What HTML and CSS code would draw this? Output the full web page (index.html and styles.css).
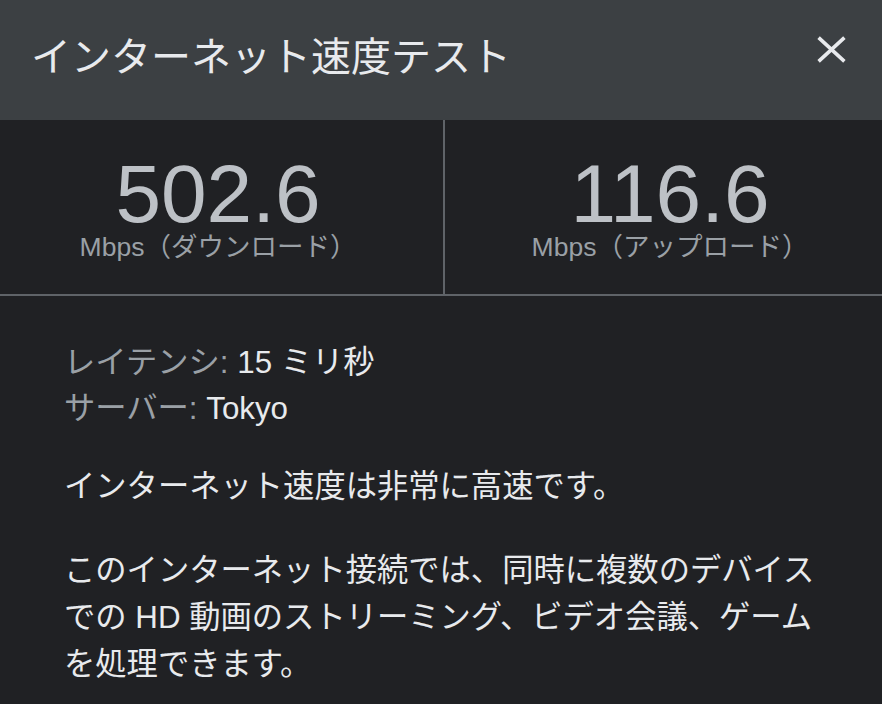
FILE: index.html
```html
<!DOCTYPE html>
<html lang="ja">
<head>
<meta charset="utf-8">
<link rel="stylesheet" href="styles.css">
</head>
<body>
<div class="dialog">
  <header class="header">
    <h1 class="title">インターネット速度テスト</h1>
    <button class="close" aria-label="閉じる">
      <svg width="29" height="27" viewBox="0 0 29 27"><path d="M1.6 1.6 L27.4 25.4 M27.4 1.6 L1.6 25.4" stroke="#e8eaed" stroke-width="3.6" fill="none"/></svg>
    </button>
  </header>
  <section class="stats">
    <div class="stat stat-down">
      <div class="value">502.6</div>
      <div class="unit">Mbps（ダウンロード）</div>
    </div>
    <div class="stat">
      <div class="value">116.6</div>
      <div class="unit">Mbps（アップロード）</div>
    </div>
  </section>
  <section class="details">
    <div class="meta">
      <div><span class="label">レイテンシ: </span><span class="val">15 ミリ秒</span></div>
      <div><span class="label">サーバー: </span><span class="val">Tokyo</span></div>
    </div>
    <p class="summary">インターネット速度は非常に高速です。</p>
    <p class="desc">このインターネット接続では、同時に複数のデバイスでの HD 動画のストリーミング、ビデオ会議、ゲームを処理できます。</p>
  </section>
</div>
</body>
</html>
```
FILE: styles.css
```css
html, body {
  margin: 0;
  padding: 0;
  background: #202124;
}
body {
  font-family: "Liberation Sans", Arial, "Noto Sans CJK JP", sans-serif;
  color: #e8eaed;
  width: 882px;
  height: 704px;
  overflow: hidden;
}
.dialog {
  width: 900px;
}
.header {
  height: 120px;
  background: #3c4043;
  display: flex;
  align-items: flex-start;
  justify-content: space-between;
  padding: 37px 54px 0 31px;
  box-sizing: border-box;
}
.title {
  margin: 0;
  font-weight: normal;
  font-size: 40px;
  color: #e8eaed;
  line-height: 40px;
}
.close {
  background: none;
  border: 0;
  padding: 0;
  margin-top: -1px;
  width: 29px;
  height: 27px;
  display: flex;
}
.stats {
  display: grid;
  grid-template-columns: 445px 455px;
  height: 176px;
  border-bottom: 2px solid #5f6368;
  box-sizing: border-box;
}
.stat-down {
  border-right: 2px solid #5f6368;
}
.stat {
  display: flex;
  flex-direction: column;
  align-items: center;
  padding: 34px 5px 0 0;
}
.stat-down {
  padding-right: 7px;
}
.value {
  font-size: 82px;
  line-height: 80px;
  color: #bdc1c6;
}
.unit {
  font-size: 26.5px;
  line-height: 26px;
  color: #9aa0a6;
}
.details {
  padding: 44px 64px 0 64px;
}
.meta {
  font-size: 31.3px;
  line-height: 46px;
}
.label {
  color: #9aa0a6;
}
.val {
  color: #e8eaed;
}
.summary {
  margin: 31px 0 0 0;
  font-size: 31.3px;
  line-height: 47px;
}
.desc {
  margin: 37px 0 0 0;
  font-size: 31.3px;
  line-height: 47px;
}
```
